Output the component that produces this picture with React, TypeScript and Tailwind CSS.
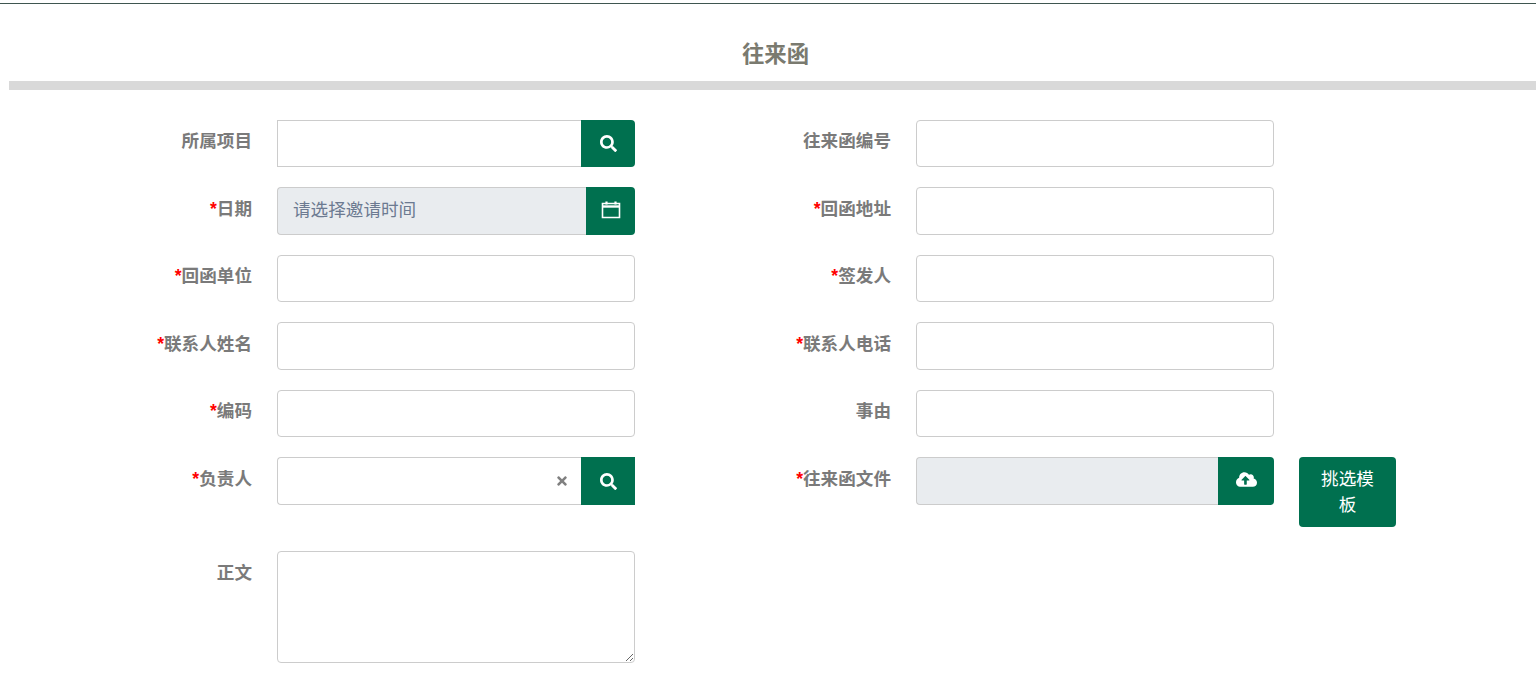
import type React from "react"
import { FaSearch, FaCloudUploadAlt, FaTimes } from "react-icons/fa"

const inputBox = "h-[47.5px] w-[358px] rounded-[4px] border border-[#cccccc] bg-white"
const greenBtn = "flex h-[47.5px] items-center justify-center rounded-r-[4px] bg-[#00704f] text-white"
const formRow = "flex gap-[13px]"

function Label({ text, required }: { text: string; required?: boolean }) {
  return (
    <div className="w-[243px] shrink-0 pt-[8.5px] text-right text-[17.6px] leading-[26.4px] font-bold text-[#7a7a7a]">
      {required && <span className="text-[#ff0000]">*</span>}
      {text}
    </div>
  )
}

function Field({ label, required, children }: { label: string; required?: boolean; children?: React.ReactNode }) {
  return (
    <div className="flex gap-[25px]">
      <Label text={label} required={required} />
      {children ?? <div className={inputBox} />}
    </div>
  )
}

function CalendarIcon() {
  return (
    <svg width="20" height="20" viewBox="0 0 20 20" fill="none" stroke="currentColor" className="mb-[2px]">
      <path d="M1.5 3.5h17v14h-17z" strokeWidth="1.6" />
      <path d="M1.5 6.5h17" strokeWidth="2.4" />
      <path d="M5.5 1.5v3M14.5 1.5v3" strokeWidth="2.2" />
    </svg>
  )
}

export default function App() {
  return (
    <div className="min-h-[681px] overflow-hidden bg-white font-['Liberation_Sans','Noto_Sans_CJK_SC',sans-serif]">
      <div className="h-[4px] border-b border-[#3f5650]" />
      <div className="ml-[9px]">
        <h1 className="pt-[34px] pb-[10px] pl-[6px] text-center text-[22.4px] leading-[33px] font-bold text-[#7a7a6f]">
          往来函
        </h1>
        <div className="h-[9px] bg-[#d9d9d9]" />

        <div className="mt-[29.75px] flex flex-col gap-[20px]">
          <div className={formRow}>
            <Field label="所属项目">
              <div className="flex w-[358px]">
                <div className="h-[47.5px] w-[304px] border border-r-0 border-[#cccccc] bg-white" />
                <button className={`${greenBtn} w-[54px]`}>
                  <FaSearch className="text-[17px]" />
                </button>
              </div>
            </Field>
            <Field label="往来函编号" />
          </div>

          <div className={formRow}>
            <Field label="日期" required>
              <div className="flex w-[358px]">
                <div className="flex h-[47.5px] w-[309px] items-center rounded-l-[4px] border border-r-0 border-[#cccccc] bg-[#e9ecef] pb-[2px] pl-[15px] text-[17.6px] text-[#6c7a91]">
                  请选择邀请时间
                </div>
                <button className={`${greenBtn} w-[49px]`}>
                  <CalendarIcon />
                </button>
              </div>
            </Field>
            <Field label="回函地址" required />
          </div>

          <div className={formRow}>
            <Field label="回函单位" required />
            <Field label="签发人" required />
          </div>

          <div className={formRow}>
            <Field label="联系人姓名" required />
            <Field label="联系人电话" required />
          </div>

          <div className={formRow}>
            <Field label="编码" required />
            <Field label="事由" />
          </div>

          <div className={formRow}>
            <Field label="负责人" required>
              <div className="flex w-[358px]">
                <div className="flex h-[47.5px] w-[304px] items-center justify-end rounded-l-[4px] border border-r-0 border-[#cccccc] bg-white pr-[12px] pb-[1px] text-[#808080]">
                  <FaTimes className="text-[14px]" />
                </div>
                <button className={`${greenBtn} w-[54px] rounded-r-none`}>
                  <FaSearch className="text-[17px]" />
                </button>
              </div>
            </Field>
            <div className="flex items-start">
              <Field label="往来函文件" required>
                <div className="flex w-[358px]">
                  <div className="h-[47.5px] w-[302px] rounded-l-[4px] border border-r-0 border-[#cccccc] bg-[#e9ecef]" />
                  <button className={`${greenBtn} w-[56px]`}>
                    <FaCloudUploadAlt className="mb-[3px] text-[21px]" />
                  </button>
                </div>
              </Field>
              <button className="ml-[25px] h-[70px] w-[97px] rounded-[4px] bg-[#00704f] px-[16px] text-[17.6px] leading-[26.4px] text-white">
                挑选模板
              </button>
            </div>
          </div>

          <div className="mt-[4px] flex gap-[25px]">
            <Label text="正文" />
            <textarea className="h-[112px] w-[358px] rounded-[4px] border border-[#cccccc] bg-white" />
          </div>
        </div>
      </div>
    </div>
  )
}
